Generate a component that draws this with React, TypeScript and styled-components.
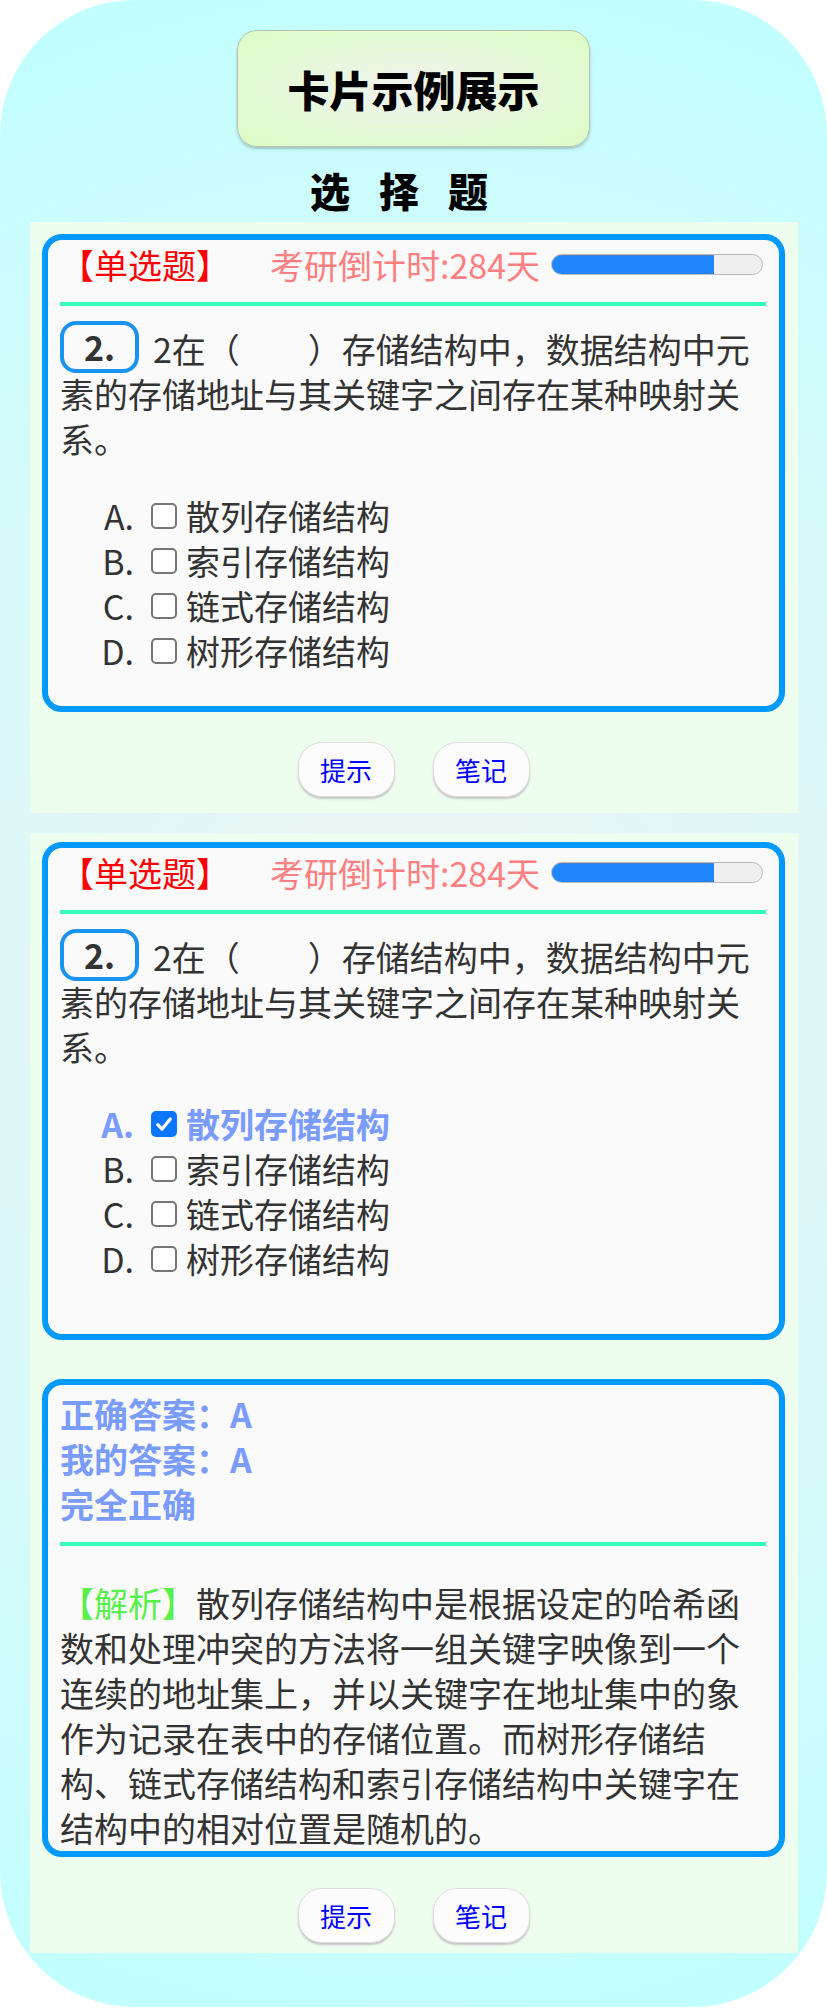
import React from "react";
import styled, { createGlobalStyle } from "styled-components";

const GlobalStyle = createGlobalStyle`
  html, body {
    margin: 0;
    padding: 0;
    background: #ffffff;
  }
  body {
    font-family: "Noto Sans CJK SC", "Noto Sans", sans-serif;
    color: #333;
  }
`;

const Frame = styled.div`
  width: 827px;
  box-sizing: border-box;
  border-radius: 135px;
  background: radial-gradient(circle, #f2f2f2 0%, #c0ffff 100%);
  padding: 30px 0 54px;
  display: flex;
  flex-direction: column;
  align-items: center;
`;

const TitleBox = styled.div`
  width: 353px;
  height: 117px;
  box-sizing: border-box;
  border: 1px solid #b8c2ae;
  border-radius: 20px;
  background: radial-gradient(ellipse at center, #f1f3ef 0%, #dcfdc5 100%);
  box-shadow: 0 2px 3px rgba(0, 0, 0, 0.22);
  display: flex;
  align-items: center;
  justify-content: center;
  font-size: 42px;
  font-weight: 900;
  color: #000;
`;

const SubTitle = styled.div`
  margin: 17px 0 6px;
  font-size: 40px;
  line-height: 52px;
  font-weight: 900;
  letter-spacing: 29px;
  color: #000;
`;

const Panel = styled.section<{ $top: number; $bottom: number; $gap?: number }>`
  width: 768px;
  box-sizing: border-box;
  background: #edfeee;
  padding: ${(p) => p.$top}px 0 ${(p) => p.$bottom}px;
  margin-bottom: ${(p) => p.$gap ?? 0}px;
  display: flex;
  flex-direction: column;
  align-items: center;
`;

const Card = styled.div<{ $mt?: number }>`
  width: 743px;
  box-sizing: border-box;
  margin-top: ${(p) => p.$mt ?? 0}px;
  border: 6px solid #0099ff;
  border-radius: 20px;
  background: #fafafa;
  padding: 2px 13px 1px 12px;
  font-size: 34px;
  line-height: 45px;
  color: #333;
`;

const Header = styled.div`
  display: flex;
  align-items: center;
  justify-content: space-between;
  height: 45px;
`;

const TypeTag = styled.span`
  color: #ff0000;
`;

const CountGroup = styled.div`
  display: flex;
  align-items: center;
  gap: 11px;
  margin-right: 3px;
`;

const Countdown = styled.span`
  color: #ff8080;
`;

const Track = styled.div`
  width: 212px;
  height: 21px;
  box-sizing: border-box;
  border: 1px solid #b8b8b8;
  border-radius: 11px;
  background: #efefef;
  overflow: hidden;
`;

const Fill = styled.div`
  height: 100%;
  background: #1f86fe;
  box-shadow: inset 0 1px 0 #4b80c4, inset 1px 0 0 #4b80c4;
`;

const Divider = styled.div<{ $mt: number; $mb: number }>`
  height: 4px;
  background: #33ffbb;
  margin: ${(p) => p.$mt}px 0 ${(p) => p.$mb}px;
`;

const Question = styled.p`
  margin: 0;
`;

const Badge = styled.span`
  display: inline-block;
  box-sizing: border-box;
  width: 79px;
  height: 52px;
  line-height: 44px;
  border: 4px solid #1a92f0;
  border-radius: 16px;
  text-align: center;
  font-weight: 700;
  color: #333;
  margin: -5px 14px -2px 0;
  vertical-align: top;
`;

const Options = styled.ul<{ $mb: number }>`
  list-style: none;
  padding: 0;
  margin: 32px 0 ${(p) => p.$mb}px;
`;

const Option = styled.li<{ $on?: boolean }>`
  display: flex;
  align-items: center;
  height: 45px;
  font-weight: ${(p) => (p.$on ? 700 : 400)};
  color: ${(p) => (p.$on ? "#7a9cff" : "#333")};
`;

const Marker = styled.span`
  width: 74px;
  text-align: right;
`;

const Box = styled.span<{ $on?: boolean }>`
  flex: none;
  width: 26px;
  height: 26px;
  box-sizing: border-box;
  margin: 0 9px 0 17px;
  border-radius: 5px;
  border: ${(p) => (p.$on ? "none" : "2px solid #767676")};
  background: ${(p) => (p.$on ? "#0a75ff" : "#ffffff")};
  display: flex;
  align-items: center;
  justify-content: center;
`;

const Answer = styled.div`
  margin-top: 4px;
  font-weight: 700;
  color: #7a9cff;
`;

const Analysis = styled.p`
  margin: 34px 0 0;
`;

const AnalysisTag = styled.span`
  color: #58f04a;
`;

const ButtonRow = styled.div<{ $mt: number }>`
  display: flex;
  justify-content: center;
  gap: 38px;
  margin-top: ${(p) => p.$mt}px;
`;

const Btn = styled.button`
  width: 97px;
  height: 55px;
  box-sizing: border-box;
  border: 1px solid #dedede;
  border-radius: 24px;
  background: #fcfcfc;
  box-shadow: 0 2px 2px #c6c6c6;
  color: #0000ff;
  font-family: "Noto Sans CJK SC", sans-serif;
  font-size: 26px;
  padding: 0;
  cursor: pointer;
`;

const options = ["散列存储结构", "索引存储结构", "链式存储结构", "树形存储结构"];
const letters = ["A.", "B.", "C.", "D."];

function Check() {
  return (
    <svg width="20" height="20" viewBox="0 0 16 16">
      <path d="M3 8.5 L6.5 12 L13 4" fill="none" stroke="#fff" strokeWidth="2.6" strokeLinecap="round" strokeLinejoin="round" />
    </svg>
  );
}

function QuestionCard({ selected, mb, mt }: { selected?: number; mb: number; mt?: number }) {
  return (
    <Card $mt={mt}>
      <Header>
        <TypeTag>【单选题】</TypeTag>
        <CountGroup>
          <Countdown>考研倒计时:284天</Countdown>
          <Track>
            <Fill style={{ width: "77%" }} />
          </Track>
        </CountGroup>
      </Header>
      <Divider $mt={15} $mb={20} />
      <Question>
        <Badge>2.</Badge>
        <span>2在（　　）存储结构中，数据结构中元素的存储地址与其关键字之间存在某种映射关系。</span>
      </Question>
      <Options $mb={mb}>
        {options.map((o, i) => (
          <Option key={o} $on={selected === i}>
            <Marker>{letters[i]}</Marker>
            <Box $on={selected === i}>{selected === i && <Check />}</Box>
            <span>{o}</span>
          </Option>
        ))}
      </Options>
    </Card>
  );
}

function Buttons({ mt }: { mt: number }) {
  return (
    <ButtonRow $mt={mt}>
      <Btn>提示</Btn>
      <Btn>笔记</Btn>
    </ButtonRow>
  );
}

export default function App() {
  return (
    <>
      <GlobalStyle />
      <Frame>
        <TitleBox>卡片示例展示</TitleBox>
        <SubTitle>选择题</SubTitle>
        <Panel $top={12} $bottom={16} $gap={20}>
          <QuestionCard mb={32} />
          <Buttons mt={30} />
        </Panel>
        <Panel $top={9} $bottom={10}>
          <QuestionCard selected={0} mb={52} />
          <Card $mt={39}>
            <Answer>
              <div>正确答案：A</div>
              <div>我的答案：A</div>
              <div>完全正确</div>
            </Answer>
            <Divider $mt={16} $mb={0} />
            <Analysis>
              <AnalysisTag>【解析】</AnalysisTag>
              <span>散列存储结构中是根据设定的哈希函数和处理冲突的方法将一组关键字映像到一个连续的地址集上，并以关键字在地址集中的象作为记录在表中的存储位置。而树形存储结构、链式存储结构和索引存储结构中关键字在结构中的相对位置是随机的。</span>
            </Analysis>
          </Card>
          <Buttons mt={31} />
        </Panel>
      </Frame>
    </>
  );
}
